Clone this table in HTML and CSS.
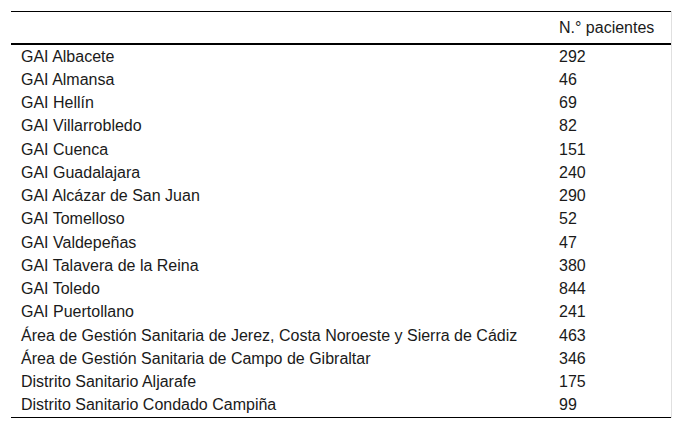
FILE: index.html
```html
<!DOCTYPE html>
<html lang="es">
<head>
<meta charset="utf-8">
<link rel="stylesheet" href="styles.css">
</head>
<body>
<div class="wrap">
<table class="tbl">
<thead>
<tr><th class="name"></th><th class="num">N.° pacientes</th></tr>
</thead>
<tbody>
<tr><td class="name">GAI Albacete</td><td class="num">292</td></tr>
<tr><td class="name">GAI Almansa</td><td class="num">46</td></tr>
<tr><td class="name">GAI Hellín</td><td class="num">69</td></tr>
<tr><td class="name">GAI Villarrobledo</td><td class="num">82</td></tr>
<tr><td class="name">GAI Cuenca</td><td class="num">151</td></tr>
<tr><td class="name">GAI Guadalajara</td><td class="num">240</td></tr>
<tr><td class="name">GAI Alcázar de San Juan</td><td class="num">290</td></tr>
<tr><td class="name">GAI Tomelloso</td><td class="num">52</td></tr>
<tr><td class="name">GAI Valdepeñas</td><td class="num">47</td></tr>
<tr><td class="name">GAI Talavera de la Reina</td><td class="num">380</td></tr>
<tr><td class="name">GAI Toledo</td><td class="num">844</td></tr>
<tr><td class="name">GAI Puertollano</td><td class="num">241</td></tr>
<tr><td class="name">Área de Gestión Sanitaria de Jerez, Costa Noroeste y Sierra de Cádiz</td><td class="num">463</td></tr>
<tr><td class="name">Área de Gestión Sanitaria de Campo de Gibraltar</td><td class="num">346</td></tr>
<tr><td class="name">Distrito Sanitario Aljarafe</td><td class="num">175</td></tr>
<tr><td class="name">Distrito Sanitario Condado Campiña</td><td class="num">99</td></tr>
</tbody>
</table>
</div>
</body>
</html>
```

FILE: styles.css
```css
html, body {
  margin: 0;
  padding: 0;
  background: #fff;
}
body {
  font-family: "Liberation Sans", Arial, sans-serif;
  font-size: 16px;
  color: #1a1a1a;
}
.wrap {
  margin: 11px 11px 0 11px;
  border-right: 1px solid #e0e0e0;
}
.tbl {
  width: 100%;
  border-collapse: collapse;
  border-top: 1px solid #000;
  border-bottom: 1px solid #000;
}
.tbl th {
  font-weight: normal;
  text-align: left;
  height: 31px;
  padding: 0 10px;
  border-bottom: 2px solid #000;
  vertical-align: middle;
}
.tbl td {
  height: 23.25px;
  padding: 0 10px;
  vertical-align: middle;
}
.tbl .num {
  width: 102px;
}
```
